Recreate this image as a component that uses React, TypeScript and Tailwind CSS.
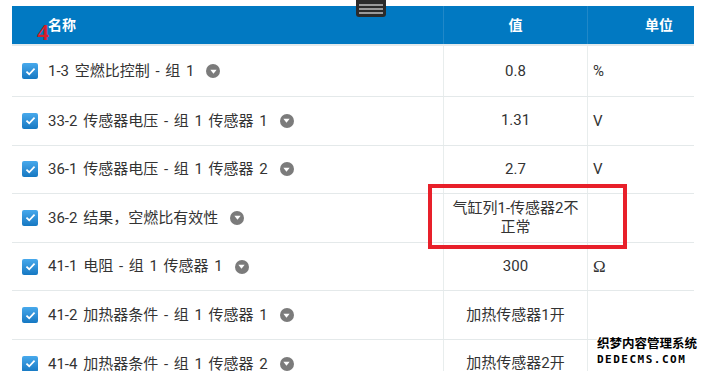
type Row = {
  name: string;
  value: React.ReactNode;
  unit?: string;
  serifUnit?: boolean;
};

const rows: Row[] = [
  { name: "1-3 空燃比控制 - 组 1", value: "0.8", unit: "%" },
  { name: "33-2 传感器电压 - 组 1 传感器 1", value: "1.31", unit: "V" },
  { name: "36-1 传感器电压 - 组 1 传感器 2", value: "2.7", unit: "V" },
  {
    name: "36-2 结果，空燃比有效性",
    value: (
      <>
        气缸列1-传感器2不
        <br />
        正常
      </>
    ),
  },
  { name: "41-1 电阻 - 组 1 传感器 1", value: "300", unit: "Ω", serifUnit: true },
  { name: "41-2 加热器条件 - 组 1 传感器 1", value: "加热传感器1开" },
  { name: "41-4 加热器条件 - 组 1 传感器 2", value: "加热传感器2开" },
];

function CheckBox() {
  return (
    <span className="flex h-[16px] w-[16px] items-center justify-center rounded-[2px] bg-gradient-to-b from-[#47a9ec] to-[#1478c2]">
      <svg viewBox="0 0 16 16" className="h-[13px] w-[13px]" fill="none" stroke="white" strokeWidth="2.2">
        <path d="M3 8.2 6.4 11.4 13 4.6" />
      </svg>
    </span>
  );
}

function DropIcon() {
  return (
    <span className="flex h-[14px] w-[14px] items-center justify-center rounded-full bg-[#7b7b7b]">
      <svg viewBox="0 0 10 10" className="h-[9px] w-[9px]">
        <path d="M1.5 3 8.5 3 5 7.5Z" fill="white" />
      </svg>
    </span>
  );
}

export default function App() {
  return (
    <div
      className="relative h-[371px] w-[707px] overflow-hidden bg-white text-[#333]"
      style={{ fontFamily: 'Roboto, "Noto Sans CJK SC", sans-serif' }}
    >
      <div className="ml-[12px] mt-[6px] w-[682px]">
        {/* header */}
        <div className="grid h-[38px] grid-cols-[431px_144px_107px] bg-[#0179c2] text-[14px] font-bold text-white">
          <div className="flex items-center pl-[36px]">名称</div>
          <div className="flex items-center justify-center border-l border-[#2088c8]">值</div>
          <div className="flex items-center justify-end border-l border-[#2088c8] pr-[21px]">单位</div>
        </div>
        <div className="h-[2px] bg-[#e4eaec]" />

        {rows.map((r, i) => (
          <div
            key={i}
            className={`grid grid-cols-[431px_144px_107px] border-b border-[#e4e9ea] text-[15px] ${
              i === 0 ? "h-[51px]" : "h-[48.6px]"
            }`}
          >
            <div className="flex items-center gap-[10px] pl-[10px]">
              <CheckBox />
              <span className="flex items-center gap-[12px]">
                <span className="[word-spacing:2px]">{r.name}</span>
                <DropIcon />
              </span>
            </div>
            <div className="flex items-center justify-center border-l border-[#e8eded] text-center leading-[19px]">
              {r.value}
            </div>
            <div
              className="flex items-center border-l border-[#e8eded] pl-[5px]"
              style={r.serifUnit ? { fontFamily: '"Liberation Serif", serif', fontSize: 17 } : undefined}
            >
              {r.unit}
            </div>
          </div>
        ))}
      </div>

      {/* drag handle */}
      <div className="absolute left-[356px] top-0 flex h-[17px] w-[30px] flex-col justify-center gap-[2px] rounded-b-[3px] bg-[#2b2b2b] px-[3px]">
        <span className="h-[2px] bg-[#9a9a9a]" />
        <span className="h-[2px] bg-[#9a9a9a]" />
        <span className="h-[2px] bg-[#9a9a9a]" />
      </div>

      {/* annotation number */}
      <span
        className="absolute left-[37px] top-[20px] text-[24px] font-bold leading-none text-[#d51f2b]"
        style={{ fontFamily: '"Liberation Serif", serif' }}
      >
        4
      </span>

      {/* red highlight box */}
      <div className="absolute left-[428px] top-[184px] h-[65px] w-[199px] border-[4px] border-[#e8202a]" />

      {/* watermark */}
      <div
        className="absolute left-[597px] top-[336px] flex flex-col items-start font-bold text-black"
        style={{
          textShadow:
            "1px 0 0 #fff, -1px 0 0 #fff, 0 1px 0 #fff, 0 -1px 0 #fff, 1px 1px 0 #fff, -1px -1px 0 #fff, 1px -1px 0 #fff, -1px 1px 0 #fff",
        }}
      >
        <span className="text-[12.5px] leading-[16px]">织梦内容管理系统</span>
        <span
          className="text-[11px] leading-[15px] tracking-[1.5px]"
          style={{ fontFamily: '"DejaVu Sans Mono", monospace' }}
        >
          DEDECMS.COM
        </span>
      </div>
    </div>
  );
}
